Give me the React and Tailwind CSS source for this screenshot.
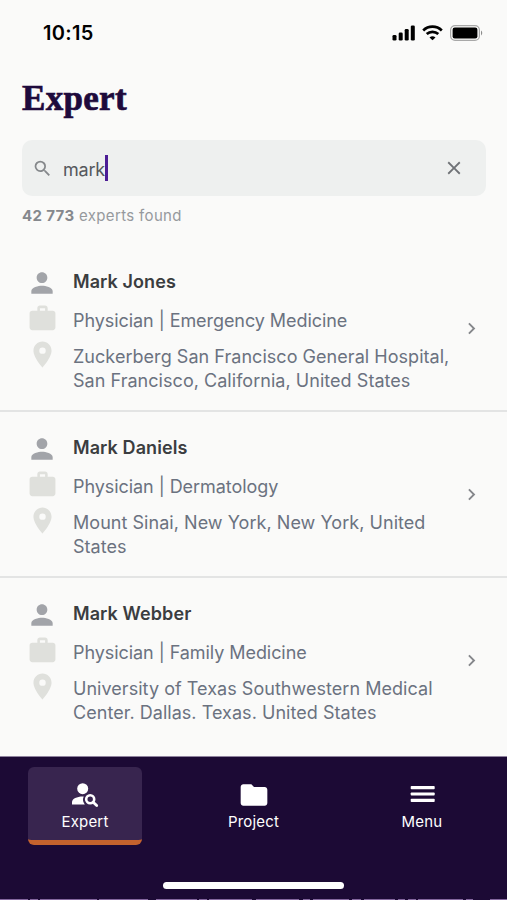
import { useState } from 'react';
import {
  MdChevronRight,
  MdClose,
  MdFolder,
  MdLocationOn,
  MdPerson,
  MdSearch,
  MdWork,
} from 'react-icons/md';

const experts = [
  {
    id: 1,
    name: 'Mark Jones',
    job: 'Physician | Emergency Medicine',
    address: ['Zuckerberg San Francisco General Hospital,', 'San Francisco, California, United States'],
  },
  {
    id: 2,
    name: 'Mark Daniels',
    job: 'Physician | Dermatology',
    address: ['Mount Sinai, New York, New York, United', 'States'],
  },
  {
    id: 3,
    name: 'Mark Webber',
    job: 'Physician | Family Medicine',
    address: ['University of Texas Southwestern Medical', 'Center. Dallas. Texas. United States'],
  },
];

const tabs = [
  { id: 'expert', label: 'Expert', icon: ExpertIcon },
  { id: 'project', label: 'Project', icon: MdFolder },
  { id: 'menu', label: 'Menu', icon: MenuIcon },
];

function ExpertIcon({ className }) {
  return (
    <svg className={className} viewBox="0 0 32 32" fill="none" aria-hidden="true">
      <circle cx="13.7" cy="9.7" r="5.5" fill="currentColor" />
      <path
        d="M3 25.5v-2.3c0-3.5 5.2-5.7 10.5-5.7h1.2a8 8 0 0 0 1.1 8Z"
        fill="currentColor"
      />
      <circle cx="21.2" cy="20.2" r="4" stroke="currentColor" strokeWidth="2.6" />
      <path d="m24.2 23.2 3.5 3.4" stroke="currentColor" strokeWidth="2.8" strokeLinecap="round" />
    </svg>
  );
}

function MenuIcon({ className }) {
  return (
    <svg className={className} viewBox="0 0 32 32" fill="currentColor" aria-hidden="true">
      <rect x="4.7" y="7" width="24" height="3.2" rx="0.8" />
      <rect x="4.7" y="13.4" width="24" height="3.2" rx="0.8" />
      <rect x="4.7" y="19.8" width="24" height="3.2" rx="0.8" />
    </svg>
  );
}

function StatusBar() {
  return (
    <div className="flex h-[66px] shrink-0 items-center justify-between pl-[43px] pr-6 text-black">
      <span className="text-[20px] font-semibold leading-6 tracking-[0.3px]">10:15</span>
      <div className="flex items-center gap-[7px]">
        <svg className="h-4 w-[23px]" viewBox="0 0 23 16" fill="currentColor" aria-hidden="true">
          <rect x="0.5" y="10" width="4" height="5.5" rx="1.3" />
          <rect x="6.7" y="7.5" width="4" height="8" rx="1.3" />
          <rect x="12.7" y="4" width="4" height="11.5" rx="1.3" />
          <rect x="18.8" y="0.5" width="4" height="15" rx="1.3" />
        </svg>
        <svg className="h-4 w-[21px]" viewBox="0 0 21 16" fill="none" aria-hidden="true">
          <path d="M1.2 5.4a13.5 13.5 0 0 1 18.6 0" stroke="currentColor" strokeWidth="2.7" />
          <path d="M4.7 9.1a8.5 8.5 0 0 1 11.6 0" stroke="currentColor" strokeWidth="2.7" />
          <path d="M10.5 15.3 7.5 12.5a4.7 4.7 0 0 1 6 0Z" fill="currentColor" />
        </svg>
        <svg className="h-4 w-[33px]" viewBox="0 0 33 16" fill="none" aria-hidden="true">
          <rect x="0.6" y="0.6" width="28.8" height="14.8" rx="4.4" stroke="#a8a8a8" strokeWidth="1.2" />
          <rect x="2.6" y="2.6" width="24.8" height="10.8" rx="2.2" fill="currentColor" />
          <path d="M31 5.6c1.6.7 1.6 4.1 0 4.8Z" fill="#8c8c8c" />
        </svg>
      </div>
    </div>
  );
}

function ExpertRow({ expert, last }) {
  return (
    <li
      className={`flex h-[166px] shrink-0 items-start pl-[26px] pr-6 pt-[21px] ${
        last ? '' : 'border-b-2 border-[#e3e4e4]'
      }`}
    >
      <div className="flex w-8 shrink-0 flex-col items-center text-[#dfe0dc]">
        <MdPerson className="size-8 text-[#a2a4a9]" />
        <MdWork className="mt-1 size-[31px]" />
        <MdLocationOn className="mt-[5px] size-[31px]" />
      </div>
      <div className="ml-[15px] flex-1 whitespace-nowrap text-[18px] text-[#6b7280]">
        <h2 className="pt-[3px] font-semibold leading-6 tracking-[0.08px] text-[#3b3d40]">{expert.name}</h2>
        <p className="mt-[15px] leading-6 tracking-[-0.06px]">{expert.job}</p>
        <div className="mt-3 leading-[23.5px] tracking-[0.04px]">
          {expert.address.map((line) => (
            <p key={line}>{line}</p>
          ))}
        </div>
      </div>
      <MdChevronRight className="mt-[50px] size-[23px] shrink-0 text-[#85878b]" />
    </li>
  );
}

export default function App() {
  const [query, setQuery] = useState('mark');
  const [active, setActive] = useState('expert');

  return (
    <div className="flex h-[900px] w-[507px] flex-col overflow-hidden bg-[#fafaf9] font-['Inter',sans-serif]">
      <StatusBar />

      <header className="shrink-0 px-[22px]">
        <h1 className="mt-[13px] font-['Liberation_Serif',serif] text-[35px] font-bold leading-10 tracking-[0.3px] text-[#1e0a3c] [-webkit-text-stroke:0.7px_#1e0a3c]">
          Expert
        </h1>
        <div className="mt-[21px] flex h-[56px] w-[464px] items-center rounded-[10px] bg-[#eef0ef] pl-[10px] pr-[21px]">
          <MdSearch className="size-[21px] text-[#85888b]" />
          <div className="ml-2.5 flex flex-1 items-center">
            <span className="pt-0.5 text-[18px] tracking-[-0.2px] text-[#55585c]">{query}</span>
            <span className="h-[26px] w-[2.5px] bg-[#4c1d95]" />
          </div>
          <button type="button" aria-label="Clear search" onClick={() => setQuery('')}>
            <MdClose className="size-[22px] text-[#6f7276]" />
          </button>
        </div>
        <p className="mt-2 text-[15px] leading-6 tracking-[0.35px] text-[#96999d]">
          <span className="font-bold text-[#85888d]">42 773</span> experts found
        </p>
      </header>

      <ul className="mt-[18px] flex flex-1 flex-col overflow-hidden">
        {experts.map((expert, index) => (
          <ExpertRow key={expert.id} expert={expert} last={index === experts.length - 1} />
        ))}
      </ul>

      <nav className="flex h-[144px] shrink-0 flex-col border-t border-[#8f839e] bg-[#1c0a35] text-white">
        <div className="flex justify-between px-7 pt-[10px]">
          {tabs.map(({ id, label, icon: Icon }) => (
            <button
              key={id}
              type="button"
              className={`flex h-[78px] w-[114px] flex-col items-center rounded-md border-b-[5px] pt-3 ${
                id === active ? 'border-[#c4622d] bg-[#38254f]' : 'border-transparent'
              }`}
              onClick={() => setActive(id)}
            >
              <Icon className="size-8" />
              <span className="mt-px text-[15px] leading-5 tracking-[0.2px]">{label}</span>
            </button>
          ))}
        </div>
        <div className="mx-auto mt-[37px] h-[7px] w-[181px] rounded-full bg-white" />
        <svg className="mt-auto h-px w-full" viewBox="0 0 507 1" aria-hidden="true">
          <path
            d="M0 .5h28M30 .5h8M40 .5h57M99 .5h49M156 .5h41M199 .5h8M209 .5h43M256 .5h43M303 .5h7M313 .5h36M352 .5h9M364 .5h31M398 .5h7M408 .5h8M418 .5h45M466 .5h7M490 .5h17"
            stroke="#84679f"
          />
        </svg>
      </nav>
    </div>
  );
}
